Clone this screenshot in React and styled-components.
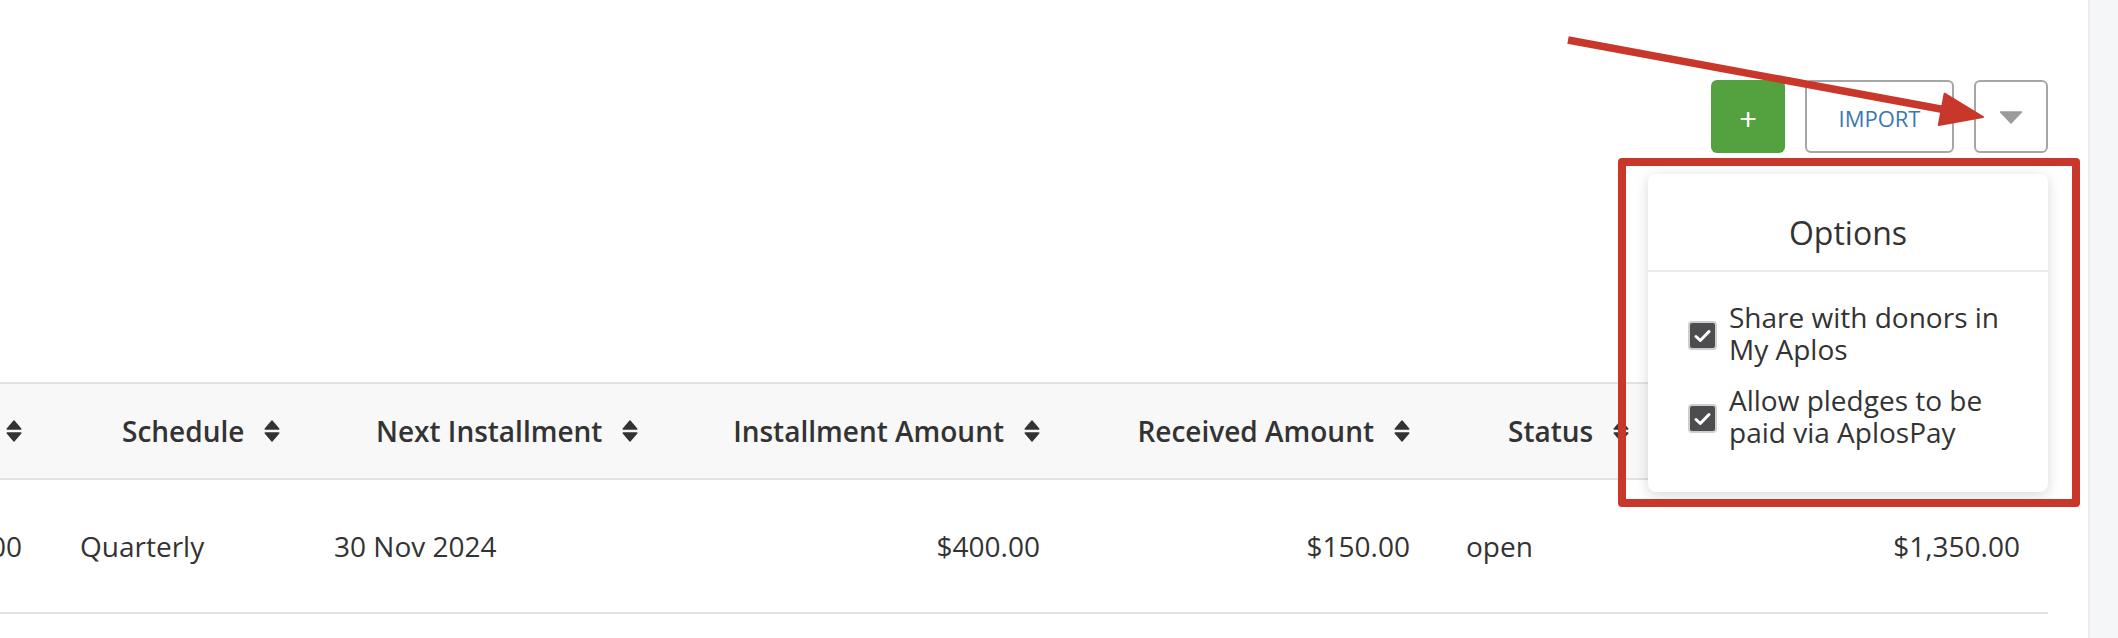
import React from 'react';
import styled, { createGlobalStyle } from 'styled-components';

const columns = [
  { key: 'amount', label: '', align: 'right', edge: true },
  { key: 'schedule', label: 'Schedule', align: 'left' },
  { key: 'next', label: 'Next Installment', align: 'left' },
  { key: 'installment', label: 'Installment Amount', align: 'right' },
  { key: 'received', label: 'Received Amount', align: 'right' },
  { key: 'status', label: 'Status', align: 'left' },
  { key: 'balance', label: 'Balance', align: 'right' },
];

const row = {
  amount: '$1,600.00',
  schedule: 'Quarterly',
  next: '30 Nov 2024',
  installment: '$400.00',
  received: '$150.00',
  status: 'open',
  balance: '$1,350.00',
};

const options = ['Share with donors in My Aplos', 'Allow pledges to be paid via AplosPay'];

function SortIcon() {
  return (
    <svg width="16" height="22" viewBox="0 0 16 22">
      <path d="M1.2 9 L8 1 L14.8 9 Z" fill="#333" stroke="#333" strokeWidth="1.4" strokeLinejoin="round" />
      <path d="M1.2 13 L14.8 13 L8 21 Z" fill="#333" stroke="#333" strokeWidth="1.4" strokeLinejoin="round" />
    </svg>
  );
}

function CheckMark() {
  return (
    <svg width="17" height="14" viewBox="0 0 17 14">
      <path d="M2 7.5 L6.3 11.5 L15 2.5" fill="none" stroke="#fff" strokeWidth="3" strokeLinecap="round" strokeLinejoin="round" />
    </svg>
  );
}

function App() {
  return (
    <>
      <GlobalStyle />
      <Page>
        <Main>
          <Toolbar>
            <AddButton>+</AddButton>
            <ImportButton>IMPORT</ImportButton>
            <MenuWrap>
              <CaretButton>
                <svg width="24" height="13" viewBox="0 0 24 13">
                  <path d="M1.5 1 L22.5 1 L12 12 Z" fill="#9b9b9b" stroke="#9b9b9b" strokeWidth="1.5" strokeLinejoin="round" />
                </svg>
              </CaretButton>
              <OptionsMenu>
                <MenuTitle>Options</MenuTitle>
                <MenuBody>
                  {options.map((text) => (
                    <OptionItem key={text}>
                      <CheckBox><CheckMark /></CheckBox>
                      <OptionText>{text}</OptionText>
                    </OptionItem>
                  ))}
                </MenuBody>
              </OptionsMenu>
              <Highlight />
            </MenuWrap>
          </Toolbar>

          <Table>
            <HeadRow>
              {columns.map((c) => (
                <HeadCell key={c.key} $align={c.align} $edge={c.edge}>
                  {c.label && <span>{c.label}</span>}
                  <SortIcon />
                </HeadCell>
              ))}
            </HeadRow>
            <BodyRow>
              {columns.map((c) => (
                <BodyCell key={c.key} $align={c.align} $edge={c.edge}>
                  {row[c.key]}
                </BodyCell>
              ))}
            </BodyRow>
          </Table>
        </Main>
        <SideStrip />

        <Arrow width="440" height="110" viewBox="0 0 440 110">
          <line x1="8" y1="10" x2="386" y2="80" stroke="#c8372a" strokeWidth="7.5" />
          <path d="M423 87 L384.6 63.7 L378.8 95.1 Z" fill="#c8372a" stroke="#c8372a" strokeWidth="2" strokeLinejoin="round" />
        </Arrow>
      </Page>
    </>
  );
}

export default App;

//  Styled Components

const GlobalStyle = createGlobalStyle`
  html, body {
    margin: 0;
    padding: 0;
    background: #fff;
    overflow: hidden;
  }
  body {
    font-family: "Open Sans", "Liberation Sans", sans-serif;
    color: #333;
  }
`;

const Page = styled.div`
  position: relative;
  display: flex;
  width: 2118px;
  height: 638px;
  overflow: hidden;
`;

const Main = styled.main`
  flex: 1;
  padding: 80px 40px 0 0;
  box-sizing: border-box;
  min-width: 0;
`;

const SideStrip = styled.aside`
  width: 30px;
  flex-shrink: 0;
  background: #f5f6f8;
  border-left: 2px solid #eaecf0;
  box-sizing: border-box;
`;

const Toolbar = styled.div`
  display: flex;
  justify-content: flex-end;
  align-items: stretch;
  gap: 20px;
  height: 73px;
`;

const BaseButton = styled.button`
  box-sizing: border-box;
  height: 73px;
  border-radius: 6px;
  font-family: "Open Sans", "Liberation Sans", sans-serif;
  display: flex;
  align-items: center;
  justify-content: center;
  padding: 0;
  cursor: pointer;
`;

const AddButton = styled(BaseButton)`
  width: 74px;
  background: #53a13f;
  border: none;
  color: #fff;
  font-size: 31px;
  font-weight: 400;
  padding-top: 4px;
`;

const ImportButton = styled(BaseButton)`
  width: 149px;
  background: #fff;
  border: 2px solid #a6a6a6;
  color: #3a78af;
  font-size: 22px;
  padding-top: 2px;
`;

const MenuWrap = styled.div`
  position: relative;
  display: flex;
`;

const CaretButton = styled(BaseButton)`
  width: 74px;
  background: #fff;
  border: 2px solid #a6a6a6;
  padding-top: 1px;
`;

const OptionsMenu = styled.div`
  position: absolute;
  top: calc(100% + 21px);
  right: 0;
  width: 400px;
  height: 318px;
  box-sizing: border-box;
  background: #fff;
  border-radius: 8px;
  box-shadow: 0 3px 14px rgba(0, 0, 0, 0.16);
  z-index: 5;
`;

const MenuTitle = styled.div`
  padding: 37px 0 15px;
  line-height: 44px;
  font-size: 32px;
  text-align: center;
  color: #333;
  border-bottom: 2px solid #ebebeb;
`;

const MenuBody = styled.div`
  display: flex;
  flex-direction: column;
  gap: 19px;
  padding: 29px 40px 0 40px;
`;

const OptionItem = styled.label`
  display: flex;
  align-items: center;
  gap: 12px;
`;

const CheckBox = styled.span`
  flex-shrink: 0;
  width: 29px;
  height: 29px;
  box-sizing: border-box;
  margin-top: 5px;
  background: #4d4d4f;
  border: 2px solid #cfcfcf;
  border-radius: 4px;
  display: flex;
  align-items: center;
  justify-content: center;
`;

const OptionText = styled.span`
  font-size: 28px;
  line-height: 32px;
  color: #333;
`;

const Highlight = styled.div`
  position: absolute;
  top: 78px;
  right: -32px;
  width: 462px;
  height: 349px;
  box-sizing: border-box;
  border: 8px solid #c8372a;
  border-radius: 4px;
  pointer-events: none;
  z-index: 6;
`;

const Arrow = styled.svg`
  position: absolute;
  left: 1560px;
  top: 30px;
  z-index: 7;
  pointer-events: none;
`;

const Table = styled.div`
  margin-top: 229px;
  width: 2048px;
`;

const grid = `
  display: grid;
  grid-template-columns: 52px 254px 394px 368px 370px 322px 1fr;
`;

const HeadRow = styled.div`
  ${grid}
  height: 98px;
  box-sizing: border-box;
  background: #f8f8f8;
  border-top: 2px solid #e2e2e2;
  border-bottom: 2px solid #e2e2e2;
`;

const BodyRow = styled.div`
  ${grid}
  height: 134px;
  box-sizing: border-box;
  border-bottom: 2px solid #e2e2e2;
`;

const HeadCell = styled.div`
  display: flex;
  align-items: center;
  gap: 20px;
  white-space: nowrap;
  overflow: hidden;
  font-size: 28px;
  font-weight: 600;
  color: #333;
  justify-content: ${(p) => (p.$align === 'right' ? 'flex-end' : 'flex-start')};
  padding: ${(p) => (p.$align === 'right' ? `0 ${p.$edge ? 30 : 28}px 0 0` : '0 0 0 70px')};
`;

const BodyCell = styled.div`
  display: flex;
  align-items: center;
  white-space: nowrap;
  overflow: hidden;
  font-size: 28px;
  color: #333;
  justify-content: ${(p) => (p.$align === 'right' ? 'flex-end' : 'flex-start')};
  padding: ${(p) => (p.$align === 'right' ? `0 ${p.$edge ? 30 : 28}px 0 0` : '0 0 0 28px')};
`;

//  End Of Styled Components
